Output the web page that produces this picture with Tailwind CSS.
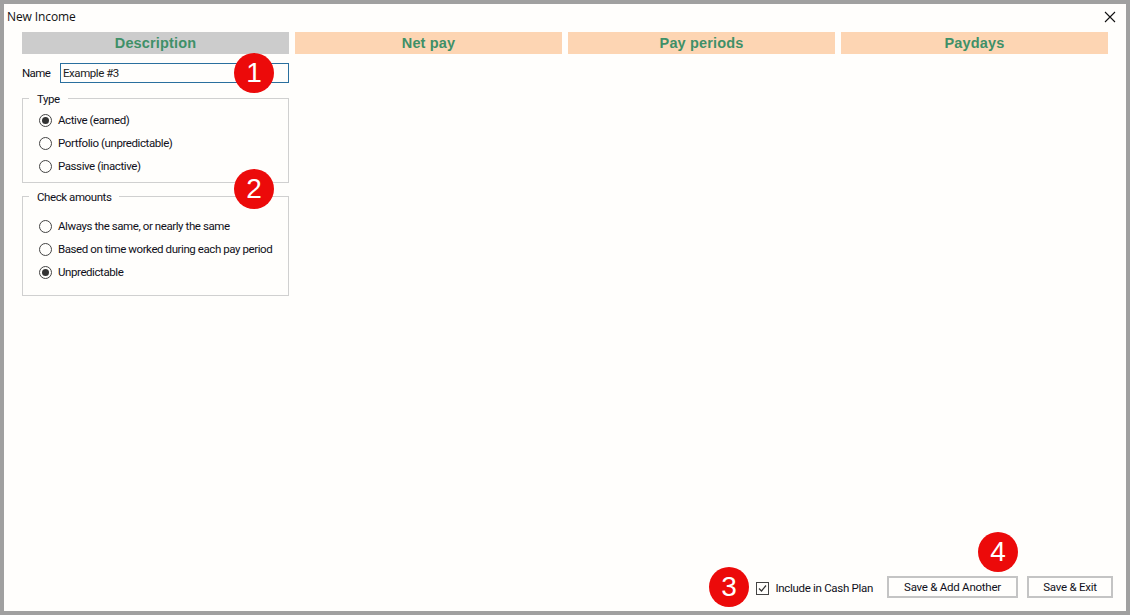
<!DOCTYPE html>
<html lang="en">
<head>
  <meta charset="UTF-8" />
  <title>New Income</title>
  <script src="https://cdn.jsdelivr.net/npm/@tailwindcss/browser@4"></script>
</head>
<body class="w-[1130px] h-[615px] overflow-hidden bg-[#a0a0a0] p-1 font-['Roboto','Liberation_Sans',sans-serif] text-[11.5px] tracking-[-0.25px] text-[#101020]">
  <div class="relative w-full h-full bg-[#fffefc] flex flex-col">
    <!-- Title bar -->
    <div class="h-[28px] flex items-center justify-between pl-[3px] pr-[9px] shrink-0">
      <span class="font-['Open_Sans',sans-serif] text-[12px] tracking-[-0.1px] text-[#111] -mt-[3px]">New Income</span>
      <svg class="w-[14px] h-[14px] -mt-[3px]" viewBox="0 0 14 14" fill="none" stroke="#111" stroke-width="1.1"><path d="M2 2 L12 12 M12 2 L2 12" /></svg>
    </div>

    <!-- Tabs -->
    <div class="flex gap-[6px] pl-[18px] shrink-0">
      <div class="w-[267px] h-[22px] pt-[1px] bg-[#cccccc] flex items-center justify-center font-['Liberation_Sans',sans-serif] font-bold text-[14.5px] tracking-[0.15px] text-[#3f9068]">Description</div>
      <div class="w-[267px] h-[22px] pt-[1px] bg-[#fdd5b3] flex items-center justify-center font-['Liberation_Sans',sans-serif] font-bold text-[14.5px] tracking-[0.15px] text-[#3f9068]">Net pay</div>
      <div class="w-[267px] h-[22px] pt-[1px] bg-[#fdd5b3] flex items-center justify-center font-['Liberation_Sans',sans-serif] font-bold text-[14.5px] tracking-[0.15px] text-[#3f9068]">Pay periods</div>
      <div class="w-[267px] h-[22px] pt-[1px] bg-[#fdd5b3] flex items-center justify-center font-['Liberation_Sans',sans-serif] font-bold text-[14.5px] tracking-[0.15px] text-[#3f9068]">Paydays</div>
    </div>

    <!-- Description column -->
    <div class="w-[267px] ml-[18px] mt-[9px] flex flex-col shrink-0">
      <div class="h-[20px] flex items-center">
        <span class="w-[38px] tracking-[-0.6px] pt-[1px]">Name</span>
        <div class="flex-1 h-[20px] border border-[#2a6f9e] flex items-center pl-[2px] pt-[1px] text-[#222] tracking-[-0.45px]">Example #3</div>
      </div>

      <!-- Type -->
      <div class="relative mt-[15px] h-[85px] border border-[#d0d0d0] pl-[16px] pt-[12px] flex flex-col gap-[5px] tracking-[-0.42px]">
        <span class="absolute -top-[8px] left-[6px] bg-[#fffefc] px-[8px] leading-[16px]">Type</span>
        <label class="h-[18px] flex items-center gap-[6px]">
          <span class="w-[13px] h-[13px] shrink-0 rounded-full border border-[#444] flex items-center justify-center"><span class="w-[7px] h-[7px] rounded-full bg-[#333]"></span></span>
          <span class="pt-[1px]">Active (earned)</span>
        </label>
        <label class="h-[18px] flex items-center gap-[6px]">
          <span class="w-[13px] h-[13px] shrink-0 rounded-full border border-[#444]"></span>
          <span class="pt-[1px]">Portfolio (unpredictable)</span>
        </label>
        <label class="h-[18px] flex items-center gap-[6px]">
          <span class="w-[13px] h-[13px] shrink-0 rounded-full border border-[#444]"></span>
          <span class="pt-[1px]">Passive (inactive)</span>
        </label>
      </div>

      <!-- Check amounts -->
      <div class="relative mt-[13px] h-[100px] border border-[#d0d0d0] pl-[16px] pt-[20px] flex flex-col gap-[5px] tracking-[-0.42px]">
        <span class="absolute -top-[8px] left-[6px] bg-[#fffefc] px-[8px] leading-[16px]">Check amounts</span>
        <label class="h-[18px] flex items-center gap-[6px]">
          <span class="w-[13px] h-[13px] shrink-0 rounded-full border border-[#444]"></span>
          <span class="pt-[1px]">Always the same, or nearly the same</span>
        </label>
        <label class="h-[18px] flex items-center gap-[6px] whitespace-nowrap">
          <span class="w-[13px] h-[13px] shrink-0 rounded-full border border-[#444]"></span>
          <span class="pt-[1px]">Based on time worked during each pay period</span>
        </label>
        <label class="h-[18px] flex items-center gap-[6px]">
          <span class="w-[13px] h-[13px] shrink-0 rounded-full border border-[#444] flex items-center justify-center"><span class="w-[7px] h-[7px] rounded-full bg-[#333]"></span></span>
          <span class="pt-[1px]">Unpredictable</span>
        </label>
      </div>
    </div>

    <!-- Footer -->
    <div class="mt-auto mb-[13px] pr-[13px] flex items-center justify-end">
      <label class="flex items-center gap-[6px] mr-[14px] mt-[2px] whitespace-nowrap tracking-[-0.3px]">
        <span class="w-[13px] h-[13px] shrink-0 border border-[#444] flex items-center justify-center">
          <svg class="w-[11px] h-[11px]" viewBox="0 0 11 11" fill="none" stroke="#333" stroke-width="1.2"><path d="M2 5.5 L4.5 8 L9 2.5" /></svg>
        </span>
        <span class="pt-[1px]">Include in Cash Plan</span>
      </label>
      <button class="w-[131px] h-[22px] pt-[1px] border-2 border-[#c4c4c4] bg-[#fffefc] text-center">Save &amp; Add Another</button>
      <button class="w-[86px] h-[22px] pt-[1px] ml-[9px] border-2 border-[#c4c4c4] bg-[#fffefc] text-center">Save &amp; Exit</button>
    </div>

    <!-- Callouts -->
    <div class="absolute left-[230px] top-[49px] w-[40px] h-[40px] rounded-full bg-[#ec0a0a] flex items-center justify-center text-white text-[28px] tracking-normal font-['Liberation_Sans',sans-serif]">1</div>
    <div class="absolute left-[230px] top-[165px] w-[40px] h-[40px] rounded-full bg-[#ec0a0a] flex items-center justify-center text-white text-[28px] tracking-normal font-['Liberation_Sans',sans-serif]">2</div>
    <div class="absolute left-[705px] top-[563px] w-[40px] h-[40px] rounded-full bg-[#ec0a0a] flex items-center justify-center text-white text-[28px] tracking-normal font-['Liberation_Sans',sans-serif]">3</div>
    <div class="absolute left-[974px] top-[528px] w-[40px] h-[40px] rounded-full bg-[#ec0a0a] flex items-center justify-center text-white text-[28px] tracking-normal font-['Liberation_Sans',sans-serif]">4</div>
  </div>
</body>
</html>
